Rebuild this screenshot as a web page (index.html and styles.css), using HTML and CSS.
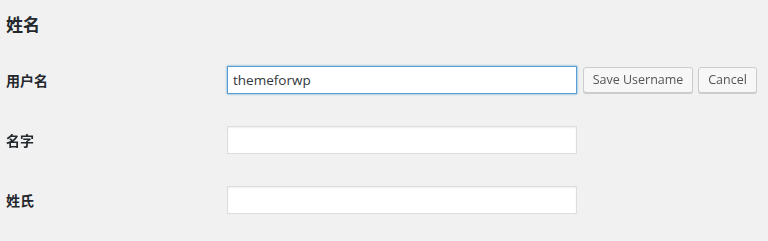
FILE: index.html
```html
<!DOCTYPE html>
<html lang="zh-CN">
<head>
    <meta charset="UTF-8">
    <meta name="viewport" content="width=device-width, initial-scale=1.0">
    <title>姓名</title>
    <link rel="stylesheet" href="styles.css">
</head>
<body>
    <div class="wrap">
        <h2 class="section-title">姓名</h2>

        <div class="form-table">
            <label class="field-label" for="user_login">用户名</label>
            <div class="field">
                <input type="text" id="user_login" class="regular-text is-focus" value="themeforwp" autofocus>
                <button class="button button-save">Save Username</button>
                <button class="button button-cancel">Cancel</button>
            </div>

            <label class="field-label" for="first_name">名字</label>
            <div class="field">
                <input type="text" id="first_name" class="regular-text">
            </div>

            <label class="field-label" for="last_name">姓氏</label>
            <div class="field">
                <input type="text" id="last_name" class="regular-text">
            </div>
        </div>
    </div>
</body>
</html>
```

FILE: styles.css
```css
body {
    margin: 0;
    background: #f1f1f1;
    color: #23282d;
    font-family: "Open Sans", "Noto Sans CJK SC", sans-serif;
    font-size: 13px;
}
.wrap {
    padding: 0 6px;
}
.section-title {
    margin: 0;
    height: 50px;
    line-height: 48px;
    font-size: 17px;
    font-weight: 700;
    font-family: "Noto Sans CJK SC", sans-serif;
}
.form-table {
    display: grid;
    grid-template-columns: 221px 1fr;
    grid-auto-rows: 60px;
    align-items: center;
}
.field-label {
    font-family: "Noto Sans CJK SC", sans-serif;
    font-size: 14px;
    font-weight: 700;
}
.field {
    display: flex;
    align-items: center;
    gap: 5px;
}
.regular-text {
    box-sizing: border-box;
    flex-shrink: 0;
    width: 350px;
    height: 28px;
    margin: 0 1px 0 0;
    padding: 3px 5px;
    border: 1px solid #ddd;
    background: #fff;
    color: #32373c;
    font-family: "Open Sans", sans-serif;
    font-size: 13.5px;
    box-shadow: inset 0 1px 2px rgba(0, 0, 0, 0.07);
    outline: none;
}
.regular-text.is-focus {
    border-color: #5b9dd9;
    box-shadow: 0 0 2px rgba(30, 140, 190, 0.8);
    caret-color: #000;
}
.button {
    box-sizing: border-box;
    flex-shrink: 0;
    height: 26px;
    padding: 0 0 1px;
    border: 1px solid #ccc;
    border-radius: 3px;
    background: #f7f7f7;
    box-shadow: 0 1px 0 #ccc;
    color: #555;
    font-family: "Open Sans", sans-serif;
    font-size: 12.5px;
    white-space: nowrap;
    text-align: center;
    cursor: pointer;
    margin-top: -1px;
}
.button-save {
    width: 110px;
}
.button-cancel {
    width: 59px;
}
```
